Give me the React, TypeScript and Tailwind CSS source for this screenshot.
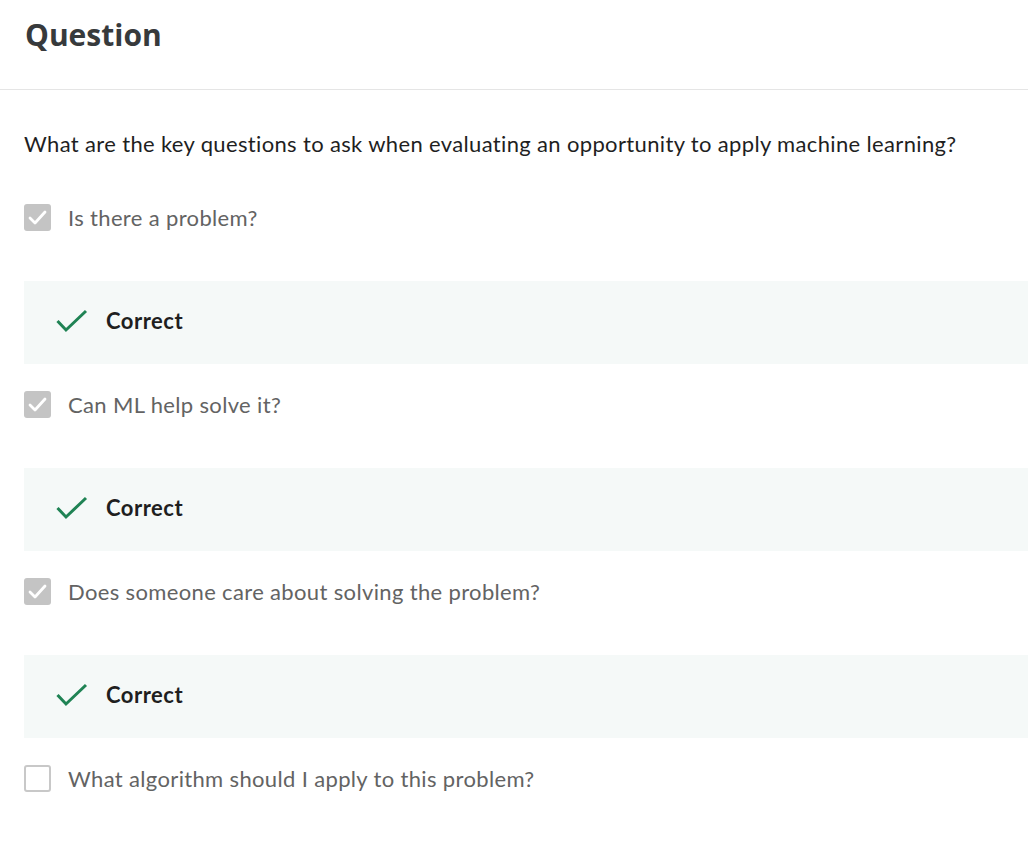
import React from "react";

const options = [
  { text: "Is there a problem?", checked: true },
  { text: "Can ML help solve it?", checked: true },
  { text: "Does someone care about solving the problem?", checked: true },
  { text: "What algorithm should I apply to this problem?", checked: false },
];

function CheckBox({ checked }: { checked: boolean }) {
  if (checked) {
    return (
      <div className="w-[27px] h-[27px] rounded-[3px] bg-[#c4c4c4] flex items-center justify-center shrink-0">
        <svg width="21" height="21" viewBox="0 0 21 21" fill="none">
          <path d="M3 11 L8 16 L18 5" stroke="#ffffff" strokeWidth="2.8" strokeLinecap="round" strokeLinejoin="round" />
        </svg>
      </div>
    );
  }
  return <div className="w-[27px] h-[27px] rounded-[3px] border-2 border-[#c8c8c8] bg-white shrink-0" />;
}

function Correct() {
  return (
    <div className="h-[83px] bg-[#f5f9f8] flex items-center pl-[32px] pb-[4px] gap-[18px]">
      <svg width="32" height="24" viewBox="0 0 32 24" fill="none">
        <path d="M1.5 12 L10 21 L30 2" stroke="#1f8354" strokeWidth="3" />
      </svg>
      <span className="text-[22px] font-bold tracking-[0.5px] text-[#1f1f1f]">Correct</span>
    </div>
  );
}

export default function App() {
  return (
    <div className="w-[1028px] min-h-[843px] bg-white" style={{ fontFamily: '"Lato", "Open Sans", sans-serif' }}>
      <div className="h-[90px] border-b border-[#e5e5e5] pl-[25px] pt-[14px]">
        <h1 className="text-[30px] font-bold text-[#373a3c] leading-[42px]" style={{ fontFamily: '"Open Sans", sans-serif' }}>Question</h1>
      </div>
      <div className="pl-[24px]">
        <p className="mt-[40px] text-[22px] tracking-[0.35px] leading-[28px] text-[#1f1f1f]">
          What are the key questions to ask when evaluating an opportunity to apply machine learning?
        </p>
        <div className="mt-[46px] flex flex-col">
          {options.map((o, i) => (
            <div key={i} className={i === 0 ? "" : "mt-[27px]"}>
              <div className="flex items-center gap-[17px] h-[27px]">
                <CheckBox checked={o.checked} />
                <span className="text-[22px] tracking-[0.35px] text-[#636363]">{o.text}</span>
              </div>
              {o.checked && (
                <div className="mt-[50px]">
                  <Correct />
                </div>
              )}
            </div>
          ))}
        </div>
      </div>
    </div>
  );
}
